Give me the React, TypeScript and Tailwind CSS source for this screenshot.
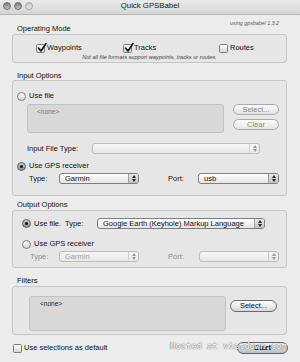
import React from "react";

function Check({ checked }: { checked?: boolean }) {
  return (
    <div className="relative w-[9px] h-[9px] shrink-0 rounded-[1.5px] border border-[#7c7c7c] bg-gradient-to-b from-white to-[#d6d6d6]">
      {checked && (
        <svg className="absolute -top-[2px] left-[0px]" width="10" height="10" viewBox="0 0 10 10">
          <path d="M1.5 5 L4 8 L9 0.5" fill="none" stroke="#111" strokeWidth="1.6" strokeLinecap="round" strokeLinejoin="round" />
        </svg>
      )}
    </div>
  );
}

function Radio({ checked }: { checked?: boolean }) {
  return (
    <div
      className={
        "w-[9px] h-[9px] shrink-0 rounded-full border flex items-center justify-center " +
        (checked
          ? "border-[#5e5e5e] bg-gradient-to-b from-[#c4c8cc] to-[#8a9096]"
          : "border-[#7c7c7c] bg-gradient-to-b from-white to-[#d6d6d6]")
      }
    >
      {checked && <div className="w-[3px] h-[3px] rounded-full bg-[#111]" />}
    </div>
  );
}

function Popup({ text, width, disabled }: { text?: string; width: string; disabled?: boolean }) {
  return (
    <div
      className={
        width +
        " h-[11px] shrink-0 flex items-stretch rounded-[3px] border overflow-hidden " +
        (disabled
          ? "border-[#bdbdbd] bg-gradient-to-b from-[#f6f6f6] to-[#e8e8e8]"
          : "border-[#7e7e7e] bg-gradient-to-b from-white to-[#e4e4e4]")
      }
    >
      <div className={"flex-1 flex items-center pl-[5px] leading-none " + (disabled ? "text-[#a0a0a0]" : "text-[#111]")}>
        {text}
      </div>
      <div
        className={
          "w-[10px] flex flex-col items-center justify-center gap-[1px] border-l " +
          (disabled ? "border-[#d0d0d0]" : "border-[#a0a0a0] bg-gradient-to-b from-[#e6e9ec] to-[#bfc4c9]")
        }
      >
        <svg width="4" height="3" viewBox="0 0 4 3">
          <path d="M0 3 L2 0 L4 3 Z" fill={disabled ? "#9a9a9a" : "#222"} />
        </svg>
        <svg width="4" height="3" viewBox="0 0 4 3">
          <path d="M0 0 L4 0 L2 3 Z" fill={disabled ? "#9a9a9a" : "#222"} />
        </svg>
      </div>
    </div>
  );
}

function Btn({ label, width, disabled, className }: { label: string; width: string; disabled?: boolean; className?: string }) {
  return (
    <div
      className={
        width +
        " h-[11px] shrink-0 rounded-full border flex items-center justify-center leading-none " +
        (disabled
          ? "border-[#a8a8a8] bg-gradient-to-b from-[#fbfbfb] to-[#e4e4e4] text-[#8a8a8a]"
          : "border-[#6a6a6a] bg-gradient-to-b from-white to-[#d8d8d8] text-[#111]") +
        " " +
        (className || "")
      }
    >
      {label}
    </div>
  );
}

function GroupLabel({ children, className }: { children: React.ReactNode; className?: string }) {
  return <div className={"h-[8px] leading-[8px] ml-[5px] text-[#111] " + (className || "")}>{children}</div>;
}

export default function App() {
  return (
    <div className="relative w-[300px] h-[362px] overflow-hidden bg-[#ececec] font-['Liberation_Sans',Arial,sans-serif] text-[7.5px] text-[#111]">
      {/* Title bar */}
      <div className="relative h-[15px] border-b border-[#b4b4b4] bg-gradient-to-b from-[#ebebeb] to-[#d4d4d4] flex items-center justify-center">
        <div className="absolute left-[3px] top-[2px] flex gap-[3px]">
          <div className="w-[8px] h-[8px] rounded-full border border-[#6e6e6e] bg-gradient-to-b from-[#7c7c7c] to-[#c4c4c4]" />
          <div className="w-[8px] h-[8px] rounded-full border border-[#6e6e6e] bg-gradient-to-b from-[#7c7c7c] to-[#c4c4c4]" />
          <div className="w-[8px] h-[8px] rounded-full border border-[#a4a4a4] bg-gradient-to-b from-[#c8c8c8] to-[#e8e8e8]" />
        </div>
        <span className="text-[7.8px] text-[#1a1a1a] leading-none -mt-[2px]">Quick GPSBabel</span>
      </div>

      <div className="pl-[12px] pr-[13px] flex flex-col">
        <div className="mt-[5px] h-[6px] leading-[6px] text-right pr-[8px] italic text-[5.3px] text-[#555]">
          using gpsbabel 1.3.2
        </div>

        {/* Operating Mode */}
        <GroupLabel className="-mt-[1px]">Operating Mode</GroupLabel>
        <div className="mt-[1px] h-[29px] rounded-[3px] border border-[#c6c6c6] bg-[#e6e6e6] flex flex-col">
          <div className="mt-[8px] h-[10px] flex items-center pl-[23px]">
            <div className="w-[87px] flex items-center gap-[2px]">
              <Check checked />
              <span>Waypoints</span>
            </div>
            <div className="w-[96px] flex items-center gap-[2px]">
              <Check checked />
              <span>Tracks</span>
            </div>
            <div className="flex items-center gap-[2px]">
              <Check />
              <span>Routes</span>
            </div>
          </div>
          <div className="mt-[1px] h-[7px] leading-[7px] text-center italic text-[5.6px] text-[#444]">
            Not all file formats support waypoints, tracks or routes.
          </div>
        </div>

        {/* Input Options */}
        <GroupLabel className="mt-[9px]">Input Options</GroupLabel>
        <div className="mt-[0px] h-[116px] rounded-[3px] border border-[#c6c6c6] bg-[#e6e6e6] flex flex-col">
          <div className="mt-[10px] h-[10px] flex items-center pl-[4px] gap-[3px]">
            <Radio />
            <span>Use file</span>
          </div>
          <div className="mt-[3px] flex items-start pl-[14px]">
            <div className="w-[197px] h-[29px] rounded-[3px] border border-[#c2c2c2] bg-[#d8d8d8] pl-[9px] pt-[3px] text-[6.5px] leading-[7px] text-[#777]">
              &lt;none&gt;
            </div>
            <div className="ml-[9px] flex flex-col gap-[4px]">
              <Btn label="Select..." width="w-[46px]" disabled />
              <Btn label="Clear" width="w-[46px]" disabled />
            </div>
          </div>
          <div className="mt-[10px] h-[11px] flex items-center pl-[14px]">
            <span className="w-[65px]">Input File Type:</span>
            <Popup width="w-[168px]" disabled />
          </div>
          <div className="mt-[7px] h-[10px] flex items-center pl-[4px] gap-[3px]">
            <Radio checked />
            <span>Use GPS receiver</span>
          </div>
          <div className="mt-[2px] h-[11px] flex items-center pl-[16px]">
            <span className="w-[30px]">Type:</span>
            <Popup text="Garmin" width="w-[80px]" />
            <span className="ml-[29px] w-[30px]">Port:</span>
            <Popup text="usb" width="w-[81px]" />
          </div>
        </div>

        {/* Output Options */}
        <GroupLabel className="mt-[5px]">Output Options</GroupLabel>
        <div className="mt-[1px] h-[58px] rounded-[3px] border border-[#c6c6c6] bg-[#e6e6e6] flex flex-col">
          <div className="mt-[7px] h-[11px] flex items-center pl-[9px]">
            <Radio checked />
            <span className="ml-[3px] w-[31px]">Use file.</span>
            <span className="w-[32px]">Type:</span>
            <Popup text="Google Earth (Keyhole) Markup Language" width="w-[168px]" />
          </div>
          <div className="mt-[10px] h-[10px] flex items-center pl-[9px] gap-[3px]">
            <Radio />
            <span>Use GPS receiver</span>
          </div>
          <div className="mt-[2px] h-[11px] flex items-center pl-[17px] text-[#8a8a8a]">
            <span className="w-[29px]">Type:</span>
            <Popup text="Garmin" width="w-[80px]" disabled />
            <span className="ml-[29px] w-[31px]">Port:</span>
            <Popup width="w-[80px]" disabled />
          </div>
        </div>

        {/* Filters */}
        <GroupLabel className="mt-[9px]">Filters</GroupLabel>
        <div className="mt-[1px] h-[49px] rounded-[3px] border border-[#c6c6c6] bg-[#e6e6e6] flex items-start">
          <div className="ml-[16px] mt-[9px] w-[197px] h-[35px] rounded-[3px] border border-[#c2c2c2] bg-[#d8d8d8] pl-[10px] pt-[3px] text-[6.5px] leading-[7px] text-[#222]">
            &lt;none&gt;
          </div>
          <Btn label="Select..." width="w-[47px]" className="ml-[4px] mt-[13px] h-[12px]" />
        </div>

        {/* Bottom row */}
        <div className="mt-[6px] h-[14px] flex items-center justify-between pl-[1px] -mr-[1px]">
          <div className="flex items-center gap-[2px]">
            <Check />
            <span>Use selections as default</span>
          </div>
          <div className="w-[51px] h-[12px] rounded-full border border-[#5a6470] bg-gradient-to-b from-[#eef2f6] to-[#b4c0cc] flex items-center justify-center font-bold text-[#111] leading-none">
            Start
          </div>
        </div>
      </div>

      {/* Watermark */}
      <div className="absolute left-[170px] top-[341px] font-['DejaVu_Sans_Mono',monospace] text-[8.8px] leading-[10px] text-white [text-shadow:0_0_1px_#666,0_0_1px_#666] whitespace-nowrap">
        Hosted at vietdown.com
      </div>
    </div>
  );
}
